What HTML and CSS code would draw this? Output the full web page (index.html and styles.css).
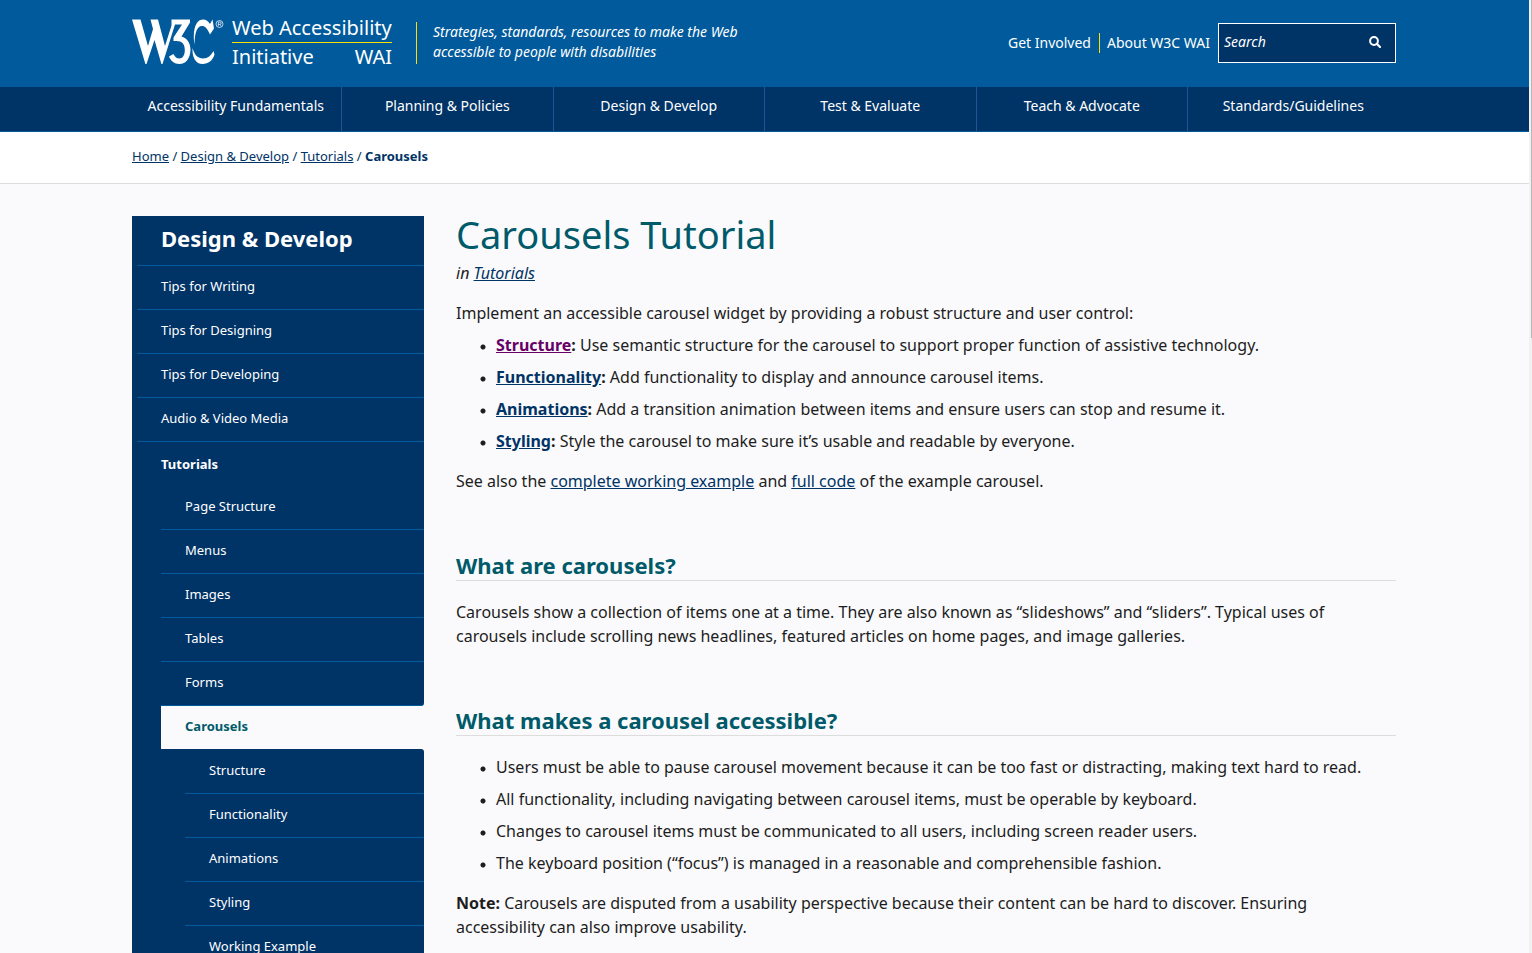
FILE: index.html
```html
<!DOCTYPE html>
<html lang="en">
<head>
<meta charset="utf-8">
<title>Carousels Tutorial | Web Accessibility Initiative (WAI) | W3C</title>
<link rel="stylesheet" href="styles.css">
</head>
<body>
<div class="page">
  <header class="site-header">
    <div class="container header-inner">
      <a class="brand" href="#" aria-label="W3C Web Accessibility Initiative">
        <svg class="w3c" viewBox="0 0 92 46" width="92" height="46" aria-hidden="true">
          <g fill="#fff">
            <path d="M0 0.500H8.500L16 27L21 10L18.500 0.500H26L33 27L39.500 6.500V0.500H58V3.500L49.500 17.500C55 19 58.500 24 58.500 30.500C58.500 39 54 45 47.500 45C42 45 38.500 41.500 37 37.500L41.500 35C43 38 44.700 39.500 47.500 39.500C50.500 39.500 52.800 36.500 52.800 31C52.800 25 50 22 44.500 22H41.500V18.500L50 5.500H43L30.500 45H29.400L22.500 21L14.500 45H13.400Z"/>
            <path d="M80.500 0.500L82 9.500L78 15.500C75.500 9.500 73 7 70 7C65 7 62.800 13.500 62.500 25.500C60.500 11.500 63.500 0.500 71 0.500C74 0.500 76.500 2.500 78 5Z"/>
            <path d="M60.500 29C62.500 36 66 39.500 71 39.500C76 39.500 79 36.500 81.500 32L82.500 35.500C80.500 41.500 76.500 45 70.500 45C64 45 60 39 60.500 29Z"/>
          </g>
          <circle cx="87.500" cy="5" r="3.500" fill="none" stroke="#fff" stroke-width=".7"/>
          <path d="M86.300 7.300V3H88a1.200 1.200 0 0 1 0 2.400H86.300M88 5.400L89.200 7.300" fill="none" stroke="#fff" stroke-width=".7"/>
        </svg>
        <span class="brand-text">
          <span class="brand-top">Web Accessibility</span>
          <span class="brand-bottom"><span>Initiative</span><span>WAI</span></span>
        </span>
      </a>
      <p class="tagline">Strategies, standards, resources to make the Web<br>accessible to people with disabilities</p>
      <div class="tools">
        <a class="tool-link" href="#">Get Involved</a>
        <a class="tool-link tool-divided" href="#">About W3C WAI</a>
        <form class="search">
          <input class="search-input" type="search" placeholder="Search" aria-label="Search">
          <button class="search-button" type="button" aria-label="Submit search">
            <svg viewBox="0 0 12 12" width="12" height="12" aria-hidden="true"><circle cx="5" cy="5" r="3.900" fill="none" stroke="#fff" stroke-width="2"/><path d="M7.800 7.800L11 11" stroke="#fff" stroke-width="2.200" stroke-linecap="round"/></svg>
          </button>
        </form>
      </div>
    </div>
  </header>

  <nav class="main-nav" aria-label="Main">
    <ul class="main-nav-list">
      <li><a href="#">Accessibility Fundamentals</a></li>
      <li><a href="#">Planning &amp; Policies</a></li>
      <li><a href="#">Design &amp; Develop</a></li>
      <li><a href="#">Test &amp; Evaluate</a></li>
      <li><a href="#">Teach &amp; Advocate</a></li>
      <li><a href="#">Standards/Guidelines</a></li>
    </ul>
  </nav>

  <nav class="breadcrumb" aria-label="Breadcrumb">
    <div class="container"><a href="#">Home</a> / <a href="#">Design &amp; Develop</a> / <a href="#">Tutorials</a> / <strong>Carousels</strong></div>
  </nav>

  <div class="container columns">
    <nav class="sidebar" aria-label="Design &amp; Develop">
      <a class="side-title" href="#">Design &amp; Develop</a>
      <ul class="side-list">
        <li><a href="#">Tips for Writing</a></li>
        <li><a href="#">Tips for Designing</a></li>
        <li><a href="#">Tips for Developing</a></li>
        <li><a href="#">Audio &amp; Video Media</a></li>
        <li><a class="side-parent" href="#">Tutorials</a>
          <ul class="side-sub">
            <li><a href="#">Page Structure</a></li>
            <li><a href="#">Menus</a></li>
            <li><a href="#">Images</a></li>
            <li><a href="#">Tables</a></li>
            <li class="before-current"><a href="#">Forms</a></li>
            <li class="current"><a href="#" aria-current="page">Carousels</a>
              <ul class="side-sub side-deep">
                <li><a href="#">Structure</a></li>
                <li><a href="#">Functionality</a></li>
                <li><a href="#">Animations</a></li>
                <li><a href="#">Styling</a></li>
                <li><a href="#">Working Example</a></li>
              </ul>
            </li>
          </ul>
        </li>
      </ul>
    </nav>

    <main class="content">
      <h1>Carousels Tutorial</h1>
      <p class="series">in <a href="#">Tutorials</a></p>
      <p class="intro">Implement an accessible carousel widget by providing a robust structure and user control:</p>
      <ul>
        <li><strong><a class="visited" href="#">Structure</a>:</strong> Use semantic structure for the carousel to support proper function of assistive technology.</li>
        <li><strong><a href="#">Functionality</a>:</strong> Add functionality to display and announce carousel items.</li>
        <li><strong><a href="#">Animations</a>:</strong> Add a transition animation between items and ensure users can stop and resume it.</li>
        <li><strong><a href="#">Styling</a>:</strong> Style the carousel to make sure it’s usable and readable by everyone.</li>
      </ul>
      <p>See also the <a href="#">complete working example</a> and <a href="#">full code</a> of the example carousel.</p>
      <h2>What are carousels?</h2>
      <p>Carousels show a collection of items one at a time. They are also known as “slideshows” and “sliders”. Typical uses of carousels include scrolling news headlines, featured articles on home pages, and image galleries.</p>
      <h2>What makes a carousel accessible?</h2>
      <ul>
        <li>Users must be able to pause carousel movement because it can be too fast or distracting, making text hard to read.</li>
        <li>All functionality, including navigating between carousel items, must be operable by keyboard.</li>
        <li>Changes to carousel items must be communicated to all users, including screen reader users.</li>
        <li>The keyboard position (“focus”) is managed in a reasonable and comprehensible fashion.</li>
      </ul>
      <p><strong>Note:</strong> Carousels are disputed from a usability perspective because their content can be hard to discover. Ensuring accessibility can also improve usability.</p>
    </main>
  </div>
</div>
<div class="scroll-track" aria-hidden="true"><div class="scroll-thumb"></div></div>
</body>
</html>
```
FILE: styles.css
```css
* {
  box-sizing: border-box;
}

body {
  display: flex;
  height: 100vh;
  margin: 0;
  overflow: hidden;
  background: #fafafc;
  color: #1d1d1d;
  font: 16px/24px "Noto Sans", sans-serif;
}

ul,
p,
h1,
h2 {
  margin: 0;
  padding: 0;
}

a {
  color: #036;
}

.page {
  flex: 1;
  min-width: 0;
  overflow: hidden;
}

.container {
  max-width: 1265px;
  margin: 0 auto;
  padding-right: 1px;
}

.site-header {
  background: #005a9c;
  color: #fff;
}

.header-inner {
  display: flex;
  align-items: center;
  height: 87px;
  padding-bottom: 2px;
}

.brand {
  display: flex;
  gap: 8px;
  color: #fff;
  text-decoration: none;
}

.w3c {
  margin-top: 5px;
}

.brand-text {
  width: 160px;
  font-size: 20px;
  line-height: 28px;
  white-space: nowrap;
}

.brand-top,
.brand-bottom {
  display: flex;
  justify-content: space-between;
}

.brand-top {
  border-bottom: 1px solid #fd0;
}

.tagline {
  margin-left: 24px;
  padding: 0 0 2px 16px;
  border-left: 1px solid #fd0;
  font-size: 14px;
  line-height: 20px;
  font-style: italic;
}

.tools {
  display: flex;
  align-items: center;
  margin-left: auto;
  font-size: 14px;
  line-height: 20px;
}

.tool-link {
  padding-right: 8px;
  color: #fff;
  text-decoration: none;
}

.tool-divided {
  padding-left: 7px;
  border-left: 1px solid #fd0;
}

.search {
  display: flex;
  width: 178px;
  height: 40px;
  border: 1px solid #fff;
  background: #036;
}

.search-input {
  flex: 1;
  min-width: 0;
  padding: 0 5px 2px;
  border: 0;
  background: none;
  color: #fff;
  font: italic 14px/20px "Noto Sans", sans-serif;
}

.search-input::placeholder {
  color: #fff;
}

.search-button {
  display: flex;
  align-items: center;
  justify-content: center;
  width: 40px;
  padding: 0 0 2px;
  border: 0;
  background: none;
}

.main-nav {
  border-bottom: 1px solid #005a9c;
  background: #036;
}

.main-nav-list {
  display: flex;
  max-width: 1268px;
  margin: 0 auto;
  list-style: none;
}

.main-nav-list li {
  flex: 1;
  border-right: 1px solid #1d5693;
}

.main-nav-list li:last-child {
  border-right: 0;
}

.main-nav-list a {
  display: block;
  padding: 8px 0 14px;
  color: #fff;
  font-size: 14px;
  line-height: 22px;
  text-align: center;
  text-decoration: none;
  white-space: nowrap;
}

.breadcrumb {
  padding: 14px 0 17px;
  border-bottom: 1px solid #ddd;
  background: #fff;
  color: #036;
  font-size: 13px;
  line-height: 20px;
}

.columns {
  display: grid;
  grid-template-columns: 292px 1fr;
  gap: 32px;
  padding-top: 32px;
}

.sidebar {
  background: #036;
}

.sidebar a {
  display: block;
  padding: 10px 24px 13px;
  color: #fff;
  font-size: 13px;
  line-height: 20px;
  text-decoration: none;
}

.sidebar .side-title {
  padding: 6px 29px 11px;
  font-size: 22px;
  line-height: 32px;
  font-weight: 700;
}

.side-list,
.side-sub {
  list-style: none;
}

.side-list {
  padding-left: 5px;
}

.side-list li {
  border-top: 1px solid #005a9c;
}

.side-list .side-parent {
  padding: 12px 24px;
  font-weight: 700;
}

.side-sub {
  margin-left: 24px;
}

.side-sub li:first-child {
  border-top: 0;
}

.side-list .before-current {
  background: #fafafc;
}

.side-list .before-current a {
  border-bottom: 1px solid #005a9c;
  border-bottom-right-radius: 3px;
  background: #036;
}

.side-list .current {
  border-top: 0;
  background: #fafafc;
}

.side-list .current > a {
  color: #005a6a;
  font-weight: 700;
}

.side-deep {
  margin-left: 0;
  padding: 1px 0 0 24px;
  border-top-right-radius: 3px;
  background: #036;
}

.content h1 {
  color: #005a6a;
  font-size: 38px;
  line-height: 36px;
  font-weight: 400;
}

.content p {
  margin-bottom: 16px;
}

.content .series {
  margin: 9px 0 16px;
  font-style: italic;
}

.content .intro {
  margin-bottom: 8px;
}

.content ul {
  margin-bottom: 16px;
  padding-left: 24px;
  list-style: none;
}

.content li {
  padding-left: 16px;
  background: radial-gradient(circle at 3px 14px, #1d1d1d 2px, transparent 3px);
}

.content li + li {
  margin-top: 8px;
}

.content h2 {
  margin: 58px 0 19px;
  padding-bottom: 1px;
  border-bottom: 1px solid #ddd;
  color: #005a6a;
  font-size: 22px;
  line-height: 28px;
  font-weight: 700;
}

.content .visited {
  color: #606;
}

.scroll-track {
  width: 3px;
  padding-left: 2px;
  background: #f1f1f1;
}

.scroll-thumb {
  height: 338px;
  background: #b8b8b8;
}
```
